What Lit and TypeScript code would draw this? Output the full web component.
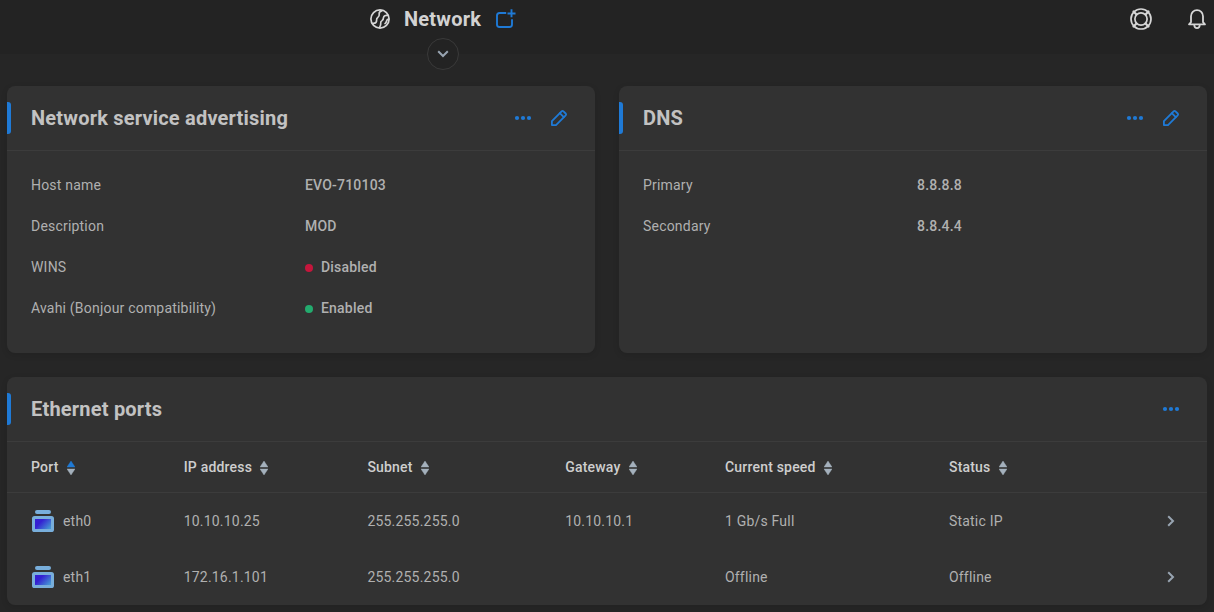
import { LitElement, html, css, svg, nothing } from "lit";
import { customElement, property } from "lit/decorators.js";

const dots = html`<svg class="dots" width="18" height="6" viewBox="0 0 18 6" fill="#1f7ad6"><circle cx="3" cy="3" r="2.1"/><circle cx="9" cy="3" r="2.1"/><circle cx="15" cy="3" r="2.1"/></svg>`;

const pencil = html`<svg width="18" height="18" viewBox="0 0 18 18" fill="none" stroke="#1f7ad6" stroke-width="1.8" stroke-linejoin="round" stroke-linecap="round"><path d="M1.9 16.1V12.2L11.6 2.3Q12.5 1.4 13.5 2.3L15.7 4.5Q16.6 5.4 15.7 6.4L6 16.1Z"/><path d="M9.8 4.2L13.8 8.2"/></svg>`;

const chevron = html`<svg width="8" height="12" viewBox="0 0 8 12" fill="none" stroke="#98a4b1" stroke-width="2"><path d="M1.2 1.2L6 6L1.2 10.8"/></svg>`;

const portIcon = html`<svg width="24" height="24" viewBox="0 0 24 24">
  <defs><linearGradient id="g" x1="0" y1="0.2" x2="1" y2="0.8"><stop offset="0.3" stop-color="#3420d2"/><stop offset="1" stop-color="#4496d4"/></linearGradient></defs>
  <rect x="4" y="1" width="16" height="4" rx="2" fill="#78aedb"/>
  <rect x="1" y="7" width="22" height="16" rx="2.6" fill="#78aedb"/>
  <rect x="4" y="10" width="16" height="10" fill="url(#g)"/>
</svg>`;

@customElement("panel-card")
export class PanelCard extends LitElement {
  @property() heading = "";
  @property({ type: Boolean }) editable = false;

  static styles = css`
    :host { display: block; background: #323232; border-radius: 8px; overflow: hidden; box-shadow: 0 2px 6px rgba(0, 0, 0, 0.12); }
    .head { display: flex; align-items: center; height: 64px; padding-right: 27px; border-bottom: 1px solid #3c3c3c; }
    .accent { width: 4px; height: 32px; background: #1f7ad6; border-radius: 0 3px 3px 0; }
    .title { flex: 1; margin: 0 0 0 20px; font: 700 20px/28px Roboto, sans-serif; letter-spacing: 0.2px; color: #c2c2c2; }
    svg { display: block; }
    .tools { display: flex; align-items: center; gap: 18px; }
  `;

  render() {
    return html`
      <div class="head">
        <div class="accent"></div>
        <h2 class="title">${this.heading}</h2>
        <div class="tools">${dots}${this.editable ? pencil : nothing}</div>
      </div>
      <slot></slot>
    `;
  }
}

@customElement("app-root")
export class AppRoot extends LitElement {
  private columns = ["Port", "IP address", "Subnet", "Gateway", "Current speed", "Status"];
  private ports = [
    ["eth0", "10.10.10.25", "255.255.255.0", "10.10.10.1", "1 Gb/s Full", "Static IP"],
    ["eth1", "172.16.1.101", "255.255.255.0", "", "Offline", "Offline"],
  ];

  static styles = css`
    :host { display: block; height: 612px; overflow: hidden; background: #262626; color: #b0b0b0; font: 400 14px/20px Roboto, sans-serif; letter-spacing: 0.2px; }
    svg { display: block; flex: none; }
    .topbar { position: relative; display: flex; align-items: flex-start; height: 54px; box-sizing: border-box; padding: 7px 7px 0 369px; background: #232323; }
    .title { display: flex; align-items: center; height: 24px; flex: 1; }
    .name { margin: 0 15px 0 13px; font: 700 20px/24px Roboto, sans-serif; letter-spacing: 0.2px; color: #d2d2d2; }
    .actions { display: flex; align-items: center; gap: 34px; height: 24px; }
    .expand { position: absolute; left: 427px; top: 38px; width: 32px; height: 32px; box-sizing: border-box; display: flex; align-items: center; justify-content: center; border: 1px solid #3a3a3a; border-radius: 50%; background: #232323; }
    .content { display: grid; grid-template-columns: 1fr 1fr; gap: 24px; padding: 32px 7px 0; }
    .wide { grid-column: 1 / -1; }
    .list { height: 189px; padding: 13px 24px 0; box-sizing: content-box; }
    .pair { display: flex; align-items: center; height: 41px; }
    .label { width: 274px; }
    .value { display: flex; align-items: center; font-weight: 500; }
    .dot { width: 8px; height: 8px; margin-right: 8px; border-radius: 50%; position: relative; top: 1px; }
    .red { background: #c5163c; }
    .green { background: #23ab6e; }
    .row { display: grid; grid-template-columns: 152.7px 183.7px 197.8px 159.8px 224px 1fr 12px; align-items: center; height: 56px; padding: 0 28px 0 24px; }
    .header { height: 50px; border-bottom: 1px solid #3c3c3c; color: #cecece; font-weight: 500; }
    .cell { display: flex; align-items: center; }
    .sort { margin-left: 8px; position: relative; top: 1px; }
    .port { margin-left: 8px; }
  `;

  private sortIcon(active: boolean) {
    return html`<svg class="sort" width="8" height="14" viewBox="0 0 8 14">${svg`<path d="M4 0L8 6H0Z" fill=${active ? "#1f7ad6" : "#a4b0bc"} stroke=${active ? "#1f7ad6" : "#a4b0bc"} stroke-width="0.4"/><path d="M0 8H8L4 14Z" fill="#a4b0bc" stroke="#a4b0bc" stroke-width="0.4"/>`}</svg>`;
  }

  private pair(label: string, value: string, tone = "") {
    return html`<div class="pair"><span class="label">${label}</span><span class="value">${tone ? html`<i class="dot ${tone}"></i>` : nothing}${value}</span></div>`;
  }

  render() {
    return html`
      <header class="topbar">
        <div class="title">
          <svg width="22" height="22" viewBox="0 0 22 22" fill="none" stroke="#d6d6d6" stroke-width="1.7" stroke-linecap="round" stroke-linejoin="round"><circle cx="11" cy="11" r="9.1"/><path d="M13 2.6Q9.8 3.8 10.2 6Q10.6 8.2 8.8 9.4Q7.4 10.2 7.6 12.2Q7.6 14.8 5.6 15.2L3.4 15.6"/><path d="M18.9 7.4Q14.9 6.8 14.5 9.6Q14.5 11.6 13 12.6Q11.4 13.6 11.7 15.4Q12 17 10.6 19.4"/><path d="M19.5 11Q18 11.2 17.6 13Q17.2 14.8 16 15.6"/></svg>
          <h1 class="name">Network</h1>
          <svg width="20" height="20" viewBox="0 0 20 20" fill="none" stroke="#1f7ad6" stroke-width="1.9"><path d="M10.2 4H3.5Q1 4 1 6.5V15.5Q1 18 3.5 18H13.5Q16 18 16 15.5V10.2"/><path d="M15.5 0.3V8.3M11.5 4.5H19.5"/></svg>
        </div>
        <div class="actions">
          <svg width="24" height="24" viewBox="0 0 24 24" fill="none" stroke="#d6d6d6" stroke-width="1.7" stroke-linecap="round"><circle cx="12" cy="12" r="10"/><circle cx="12" cy="12" r="6.1"/><path d="M16.5 7.5L19.5 4.5M7.5 7.5L4.5 4.5M16.5 16.5L19.5 19.5M7.5 16.5L4.5 19.5" stroke-width="2.2"/></svg>
          <svg width="20" height="22" viewBox="0 0 20 22" fill="none" stroke="#d6d6d6" stroke-width="1.8" stroke-linecap="round" stroke-linejoin="round"><path d="M2 16.3L4 14.2V8.2A6 6 0 0 1 16 8.2V14.2L18 16.3Z"/><path d="M7.3 17.3Q7.5 20.2 10 20.2T12.7 17.3"/></svg>
        </div>
        <div class="expand"><svg width="12" height="8" viewBox="0 0 12 8" fill="none" stroke="#98a4b1" stroke-width="2"><path d="M1.2 1.3L6 6L10.8 1.3"/></svg></div>
      </header>
      <main class="content">
        <panel-card heading="Network service advertising" editable>
          <div class="list">
            ${this.pair("Host name", "EVO-710103")}
            ${this.pair("Description", "MOD")}
            ${this.pair("WINS", "Disabled", "red")}
            ${this.pair("Avahi (Bonjour compatibility)", "Enabled", "green")}
          </div>
        </panel-card>
        <panel-card heading="DNS" editable>
          <div class="list">
            ${this.pair("Primary", "8.8.8.8")}
            ${this.pair("Secondary", "8.8.4.4")}
          </div>
        </panel-card>
        <panel-card class="wide" heading="Ethernet ports">
          <div class="row header">${this.columns.map((c, i) => html`<div class="cell">${c}${this.sortIcon(i === 0)}</div>`)}</div>
          ${this.ports.map((p) => html`<div class="row">
            ${p.map((v, i) => html`<div class="cell">${i === 0 ? html`${portIcon}<span class="port">${v}</span>` : v}</div>`)}
            ${chevron}
          </div>`)}
        </panel-card>
      </main>
    `;
  }
}
